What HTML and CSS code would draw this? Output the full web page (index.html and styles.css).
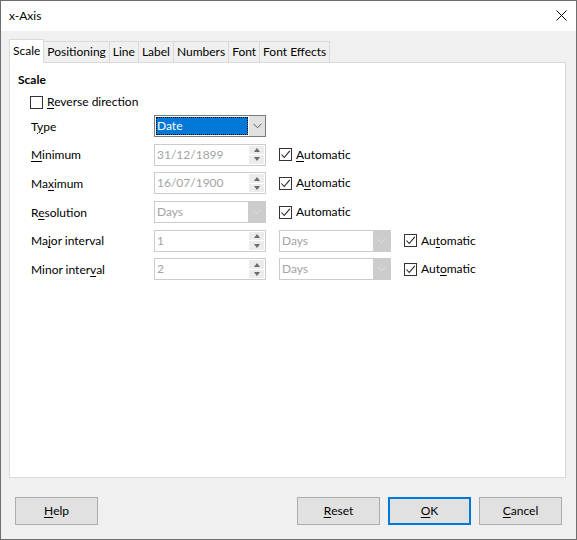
FILE: index.html
```html
<!DOCTYPE html>
<html>
<head>
<meta charset="utf-8">
<title>x-Axis</title>
<link rel="stylesheet" href="styles.css">
</head>
<body>
<div class="window">
  <div class="titlebar">
    <span class="title">x-Axis</span>
    <svg class="close" width="11" height="11" viewBox="0 0 11 11"><path d="M0.5 0.5 L10.5 10.5 M10.5 0.5 L0.5 10.5" stroke="#000" stroke-width="1" fill="none"/></svg>
  </div>
  <div class="content">
    <div class="tabs">
      <div class="tab active">Scale</div>
      <div class="tab">Positioning</div>
      <div class="tab">Line</div>
      <div class="tab">Label</div>
      <div class="tab">Numbers</div>
      <div class="tab">Font</div>
      <div class="tab">Font Effects</div>
    </div>
    <div class="panel">
      <div class="section-title">Scale</div>
      <div class="check reverse"><span class="box"></span><span><u>R</u>everse direction</span></div>
      <div class="form">
        <div class="label">T<u>y</u>pe</div>
        <div class="combo focus"><div class="sel">Date</div><div class="arrow"><svg width="9" height="6" viewBox="0 0 9 6"><path d="M0.5 0.8 L4.5 4.8 L8.5 0.8" stroke="#5a5a5a" fill="none"/></svg></div></div>
        <div class="cell"></div>
        <div class="cell"></div>

        <div class="label"><u>M</u>inimum</div>
        <div class="spin"><div class="val">31/12/1899</div><div class="spinbtn"><div class="up"><span class="tri-up"></span></div><div class="down"><span class="tri-down"></span></div></div></div>
        <div class="check"><span class="box checked"><svg width="11" height="11" viewBox="0 0 11 11"><path d="M1.5 5.5 L4.2 8.5 L9.8 1.8" stroke="#222" stroke-width="1.1" fill="none"/></svg></span><span><u>A</u>utomatic</span></div>
        <div class="cell"></div>

        <div class="label">Ma<u>x</u>imum</div>
        <div class="spin"><div class="val">16/07/1900</div><div class="spinbtn"><div class="up"><span class="tri-up"></span></div><div class="down"><span class="tri-down"></span></div></div></div>
        <div class="check"><span class="box checked"><svg width="11" height="11" viewBox="0 0 11 11"><path d="M1.5 5.5 L4.2 8.5 L9.8 1.8" stroke="#222" stroke-width="1.1" fill="none"/></svg></span><span>A<u>u</u>tomatic</span></div>
        <div class="cell"></div>

        <div class="label">R<u>e</u>solution</div>
        <div class="combo disabled"><div class="val">Days</div><div class="arrow"><svg width="9" height="6" viewBox="0 0 9 6"><path d="M0.5 0.8 L4.5 4.8 L8.5 0.8" stroke="#e2e2e2" fill="none"/></svg></div></div>
        <div class="check"><span class="box checked"><svg width="11" height="11" viewBox="0 0 11 11"><path d="M1.5 5.5 L4.2 8.5 L9.8 1.8" stroke="#222" stroke-width="1.1" fill="none"/></svg></span><span>Automat<u>i</u>c</span></div>
        <div class="cell"></div>

        <div class="label">Ma<u>j</u>or interval</div>
        <div class="spin"><div class="val">1</div><div class="spinbtn"><div class="up"><span class="tri-up"></span></div><div class="down"><span class="tri-down"></span></div></div></div>
        <div class="combo disabled"><div class="val">Days</div><div class="arrow"><svg width="9" height="6" viewBox="0 0 9 6"><path d="M0.5 0.8 L4.5 4.8 L8.5 0.8" stroke="#e2e2e2" fill="none"/></svg></div></div>
        <div class="check"><span class="box checked"><svg width="11" height="11" viewBox="0 0 11 11"><path d="M1.5 5.5 L4.2 8.5 L9.8 1.8" stroke="#222" stroke-width="1.1" fill="none"/></svg></span><span>Au<u>t</u>omatic</span></div>

        <div class="label">Minor inter<u>v</u>al</div>
        <div class="spin"><div class="val">2</div><div class="spinbtn"><div class="up"><span class="tri-up"></span></div><div class="down"><span class="tri-down"></span></div></div></div>
        <div class="combo disabled"><div class="val">Days</div><div class="arrow"><svg width="9" height="6" viewBox="0 0 9 6"><path d="M0.5 0.8 L4.5 4.8 L8.5 0.8" stroke="#e2e2e2" fill="none"/></svg></div></div>
        <div class="check"><span class="box checked"><svg width="11" height="11" viewBox="0 0 11 11"><path d="M1.5 5.5 L4.2 8.5 L9.8 1.8" stroke="#222" stroke-width="1.1" fill="none"/></svg></span><span>Aut<u>o</u>matic</span></div>
      </div>
    </div>
  </div>
  <div class="buttons">
    <div class="btn"><u>H</u>elp</div>
    <div class="spacer"></div>
    <div class="btn"><u>R</u>eset</div>
    <div class="btn default"><u>O</u>K</div>
    <div class="btn"><u>C</u>ancel</div>
  </div>
</div>
</body>
</html>
```

FILE: styles.css
```css
* { box-sizing: border-box; }
html, body { margin: 0; padding: 0; background: #f0f0f0; }
body {
  font-family: "Segoe UI", Lato, "Noto Sans", sans-serif;
  font-size: 12px;
  color: #000;
}
u { text-decoration: underline; text-underline-offset: 2px; text-decoration-thickness: 1px; }

.window {
  width: 577px;
  height: 540px;
  border: 1px solid #6e6e6e;
  background: #f0f0f0;
  display: flex;
  flex-direction: column;
}
.titlebar {
  height: 30px;
  background: #fff;
  display: flex;
  align-items: center;
  padding: 0 9px 0 8px;
}
.title { flex: 1; line-height: 16px; }
.close { display: block; margin-top: -1px; }

.content { padding: 8px 10px 0 8px; }
.tabs {
  display: flex;
  align-items: flex-end;
  height: 24px;
  margin-bottom: -1px;
}
.tab {
  height: 22px;
  line-height: 20px;
  padding: 0 3px;
  border: 1px solid #d9d9d9;
  border-left: none;
  background: #f0f0f0;
  white-space: nowrap;
}
.tab.active {
  height: 24px;
  line-height: 22px;
  background: #fff;
  border-left: 1px solid #d9d9d9;
  border-bottom-color: #fff;
  position: relative;
  z-index: 1;
}
.panel {
  height: 416px;
  background: #fff;
  border: 1px solid #d9d9d9;
  padding: 9px 8px 8px;
}
.section-title { font-weight: bold; line-height: 16px; }

.check { display: flex; align-items: center; gap: 4px; line-height: 16px; white-space: nowrap; }
.reverse { margin: 6px 0 0 12px; }
.box {
  width: 13px;
  height: 13px;
  border: 1px solid #333;
  background: #fff;
  display: flex;
  align-items: center;
  justify-content: center;
  flex: none;
}
.box svg { display: block; }

.form {
  margin: 5px 0 0 13px;
  display: grid;
  grid-template-columns: 110px 112px 112px auto;
  grid-auto-rows: 22px;
  column-gap: 13px;
  row-gap: 6.7px;
  align-items: center;
}

.combo, .spin {
  height: 22px;
  display: flex;
  border: 1px solid #cccccc;
  background: #fff;
  color: #a3a3a3;
}
.val { flex: 1; padding-left: 2px; line-height: 20px; }
.combo.focus { border-color: #7a7a7a; color: #fff; }
.sel {
  flex: 1;
  margin: 1px 0 1px 1px;
  background: #0078d7;
  outline: 1px dotted #000;
  outline-offset: -1px;
  line-height: 18px;
  padding-left: 1px;
}
.arrow {
  width: 17px;
  display: flex;
  align-items: center;
  justify-content: center;
}
.combo.focus .arrow { background: #e1e1e1; border-left: 1px solid #fff; }
.combo.disabled .arrow { background: #cccccc; }
.arrow svg { display: block; }

.spinbtn {
  width: 15px;
  margin: 1px 1px 1px 0;
  display: flex;
  flex-direction: column;
  gap: 1px;
  background: #fff;
}
.spinbtn .up, .spinbtn .down {
  flex: 1;
  background: #ececec;
  display: flex;
  align-items: center;
  justify-content: center;
}
.tri-up, .tri-down { width: 0; height: 0; border-left: 3.5px solid transparent; border-right: 3.5px solid transparent; }
.tri-up { border-bottom: 4px solid #6b6b6b; }
.tri-down { border-top: 4px solid #6b6b6b; }

.buttons {
  display: flex;
  gap: 8px;
  padding: 19px 14px 0 14px;
}
.spacer { flex: 1; }
.btn {
  width: 83px;
  height: 28px;
  background: #e1e1e1;
  border: 1px solid #adadad;
  display: flex;
  align-items: center;
  justify-content: center;
  line-height: 16px;
}
.btn.default { border-color: #0078d7; box-shadow: inset 0 0 0 1px #0078d7; }
```
